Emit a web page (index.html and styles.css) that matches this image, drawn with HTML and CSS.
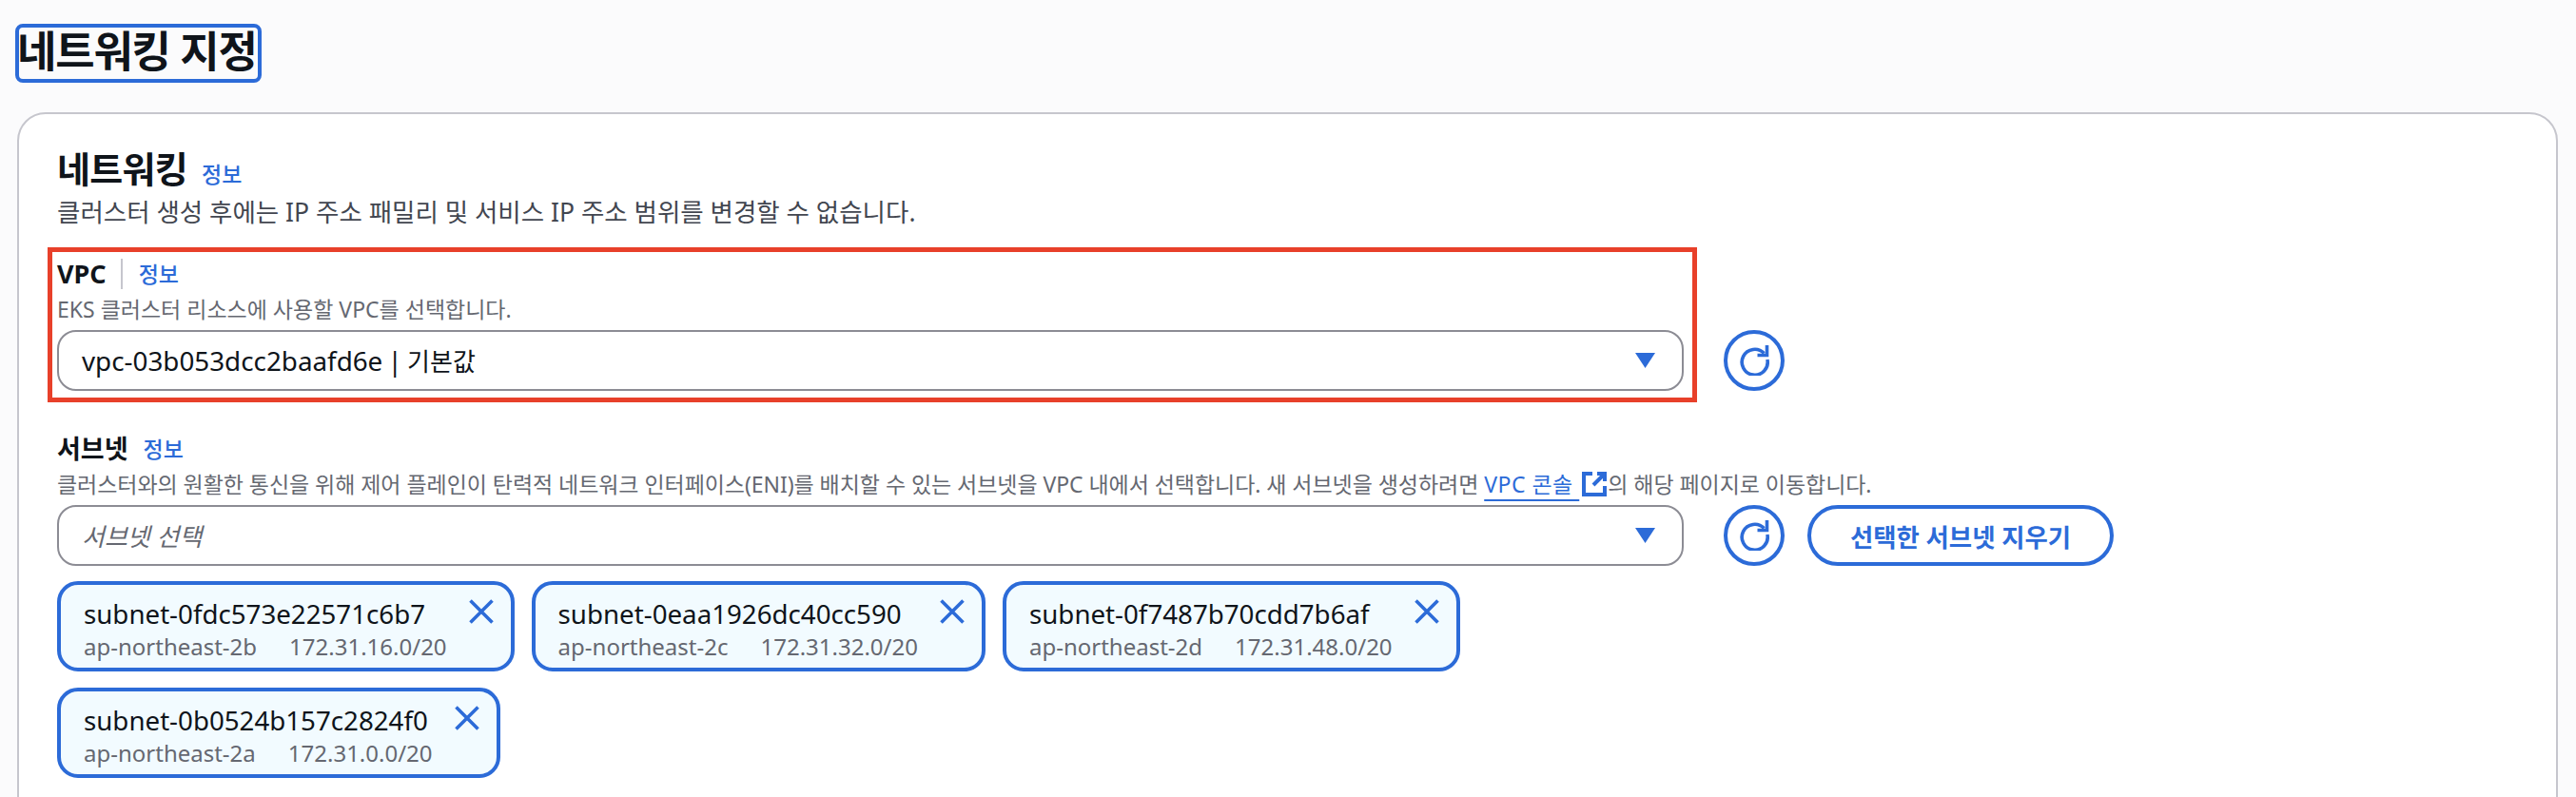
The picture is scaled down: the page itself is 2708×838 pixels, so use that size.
FILE: index.html
```html
<!DOCTYPE html>
<html lang="ko">
<head>
<meta charset="utf-8">
<title>네트워킹 지정</title>
<link rel="stylesheet" href="styles.css">
</head>
<body>
<main class="page">
  <h1 class="page-title">네트워킹 지정</h1>
  <section class="card">
    <header class="card-head">
      <div class="card-title-row"><h2 class="card-title">네트워킹</h2><a class="info">정보</a></div>
      <p class="card-desc">클러스터 생성 후에는 IP 주소 패밀리 및 서비스 IP 주소 범위를 변경할 수 없습니다.</p>
    </header>

    <div class="field field-vpc">
      <div class="annotation"></div>
      <div class="label-row"><span class="label">VPC</span><span class="divider"></span><a class="info">정보</a></div>
      <p class="hint">EKS 클러스터 리소스에 사용할 VPC를 선택합니다.</p>
      <div class="control-row">
        <div class="select"><span class="select-value">vpc-03b053dcc2baafd6e | <span class="select-value-ko">기본값</span></span><svg class="caret" viewBox="0 0 21 16"><path d="M0 0H21L10.5 16Z"/></svg></div>
        <button class="icon-btn"><svg viewBox="0 0 32 32"><path d="M26.5 8.5A13.5 13.5 0 1 0 29.9 15"/><path d="M29.5 0V10.5H19.5"/></svg></button>
      </div>
    </div>

    <div class="field field-subnet">
      <div class="label-row"><span class="label">서브넷</span><a class="info info-near">정보</a></div>
      <p class="hint hint-long">클러스터와의 원활한 통신을 위해 제어 플레인이 탄력적 네트워크 인터페이스(ENI)를 배치할 수 있는 서브넷을 VPC 내에서 선택합니다. 새 서브넷을 생성하려면 <a class="ext-link">VPC 콘솔 </a><svg class="ext-icon" viewBox="0 0 28 28"><path d="M12 3H3V25H25V16"/><path d="M13 15L24 4"/><path d="M17 3H25V11"/></svg>의 해당 페이지로 이동합니다.</p>
      <div class="control-row">
        <div class="select"><span class="select-placeholder">서브넷 선택</span><svg class="caret" viewBox="0 0 21 16"><path d="M0 0H21L10.5 16Z"/></svg></div>
        <button class="icon-btn"><svg viewBox="0 0 32 32"><path d="M26.5 8.5A13.5 13.5 0 1 0 29.9 15"/><path d="M29.5 0V10.5H19.5"/></svg></button>
        <button class="text-btn">선택한 서브넷 지우기</button>
      </div>
      <ul class="tokens">
        <li class="token"><div class="token-body"><div class="token-name">subnet-0fdc573e22571c6b7</div><div class="token-meta"><span>ap-northeast-2b</span><span>172.31.16.0/20</span></div></div><svg class="token-x" viewBox="0 0 26 26"><path d="M1.5 1.5L24.5 24.5M24.5 1.5L1.5 24.5"/></svg></li>
        <li class="token"><div class="token-body"><div class="token-name">subnet-0eaa1926dc40cc590</div><div class="token-meta"><span>ap-northeast-2c</span><span>172.31.32.0/20</span></div></div><svg class="token-x" viewBox="0 0 26 26"><path d="M1.5 1.5L24.5 24.5M24.5 1.5L1.5 24.5"/></svg></li>
        <li class="token"><div class="token-body"><div class="token-name">subnet-0f7487b70cdd7b6af</div><div class="token-meta"><span>ap-northeast-2d</span><span>172.31.48.0/20</span></div></div><svg class="token-x" viewBox="0 0 26 26"><path d="M1.5 1.5L24.5 24.5M24.5 1.5L1.5 24.5"/></svg></li>
        <li class="token"><div class="token-body"><div class="token-name">subnet-0b0524b157c2824f0</div><div class="token-meta"><span>ap-northeast-2a</span><span>172.31.0.0/20</span></div></div><svg class="token-x" viewBox="0 0 26 26"><path d="M1.5 1.5L24.5 24.5M24.5 1.5L1.5 24.5"/></svg></li>
      </ul>
    </div>
  </section>
</main>
</body>
</html>
```

FILE: styles.css
```css
* { box-sizing: border-box; }
html, body { margin: 0; height: 100%; overflow: hidden; }
body {
  background: #fbfbfc;
  color: #0f141a;
  font-family: "Noto Sans", "Noto Sans CJK KR", sans-serif;
}
.page { height: 838px; overflow: hidden; padding: 25px 19px 0 16px; }
.page-title {
  display: block;
  width: 259px;
  margin: 0;
  height: 62px;
  padding: 0;
  border: 4px solid #2c6bd8;
  border-radius: 8px;
  font-size: 45px;
  line-height: 50px;
  font-weight: 700;
  letter-spacing: -1.2px;
  text-indent: -2px;
  white-space: nowrap;
}
.card {
  margin: 31px 0 0 2px;
  height: 800px;
  padding: 34px 40px 0;
  background: #fff;
  border: 2px solid #c6c6cd;
  border-radius: 30px;
}
.card-title-row { display: flex; align-items: baseline; gap: 15px; height: 46px; }
.card-title { margin: 0; font-size: 38px; line-height: 46px; font-weight: 700; letter-spacing: -.7px; }
.info { color: #2c6bd8; font-size: 23px; font-weight: 500; line-height: 30px; }
.card-desc { margin: 3px 0 0; font-size: 26.5px; line-height: 40px; color: #424650; }
.field { position: relative; }
.field-vpc { margin-top: 26px; }
.field-subnet { margin-top: 42px; }
.annotation {
  position: absolute;
  left: -10px; top: -9px;
  width: 1734px; height: 163px;
  border: 5px solid #e8402a;
  pointer-events: none;
}
.label-row { display: flex; align-items: center; height: 38px; }
.label { font-size: 27px; font-weight: 700; line-height: 38px; }
.divider { width: 2px; height: 32px; background: #c6c6cd; margin: 0 17px 0 15px; }
.info-near { margin-left: 16px; }
.hint { margin: 0; height: 40px; font-size: 23px; line-height: 36px; color: #656871; white-space: nowrap; }
.hint-long { letter-spacing: -.05px; }
.ext-link {
  color: #2c6bd8;
  letter-spacing: .5px;
  text-decoration: underline 2px #2c6bd8;
  text-underline-offset: 7px;
}
.ext-icon { width: 28px; height: 28px; margin-left: 2px; vertical-align: -5px; fill: none; stroke: #2c6bd8; stroke-width: 4; }
.control-row { display: flex; align-items: center; height: 64px; }
.select {
  display: flex;
  align-items: center;
  justify-content: space-between;
  width: 1710px;
  height: 64px;
  padding: 0 28px 0 24px;
  border: 2px solid #8c8c94;
  border-radius: 20px;
  background: #fff;
}
.select-value { font-size: 27.8px; word-spacing: -2px; color: #0f141a; }
.select-value-ko { font-size: 26px; }
.select-placeholder { font-size: 26px; font-style: italic; color: #656871; }
.caret { width: 21px; height: 16px; fill: #2c6bd8; }
.icon-btn {
  display: flex;
  align-items: center;
  justify-content: center;
  width: 64px;
  height: 64px;
  margin-left: 42px;
  padding: 0;
  background: #fff;
  border: 4px solid #2c6bd8;
  border-radius: 50%;
}
.icon-btn svg { width: 32px; height: 32px; fill: none; stroke: #2c6bd8; stroke-width: 3.6; }
.text-btn {
  width: 322px;
  height: 64px;
  margin-left: 24px;
  padding: 0;
  background: #fff;
  border: 4px solid #2c6bd8;
  border-radius: 32px;
  color: #2c6bd8;
  font: 700 26.4px "Noto Sans", "Noto Sans CJK KR", sans-serif;
}
.tokens { display: flex; flex-wrap: wrap; gap: 17px 18px; max-width: 1710px; margin: 16px 0 0; padding: 0; list-style: none; }
.token {
  display: flex;
  align-items: flex-start;
  justify-content: space-between;
  gap: 23px;
  height: 95px;
  padding: 12px 18px 0 24px;
  background: #f2fbff;
  border: 4px solid #2c6bd8;
  border-radius: 22px;
}
.token-name { font-size: 27.7px; line-height: 36px; white-space: nowrap; }
.token-meta { display: flex; gap: 34px; margin-top: 1px; font-size: 24px; line-height: 32px; color: #656871; white-space: nowrap; }
.token-x { width: 26px; height: 26px; margin-top: 3px; fill: none; stroke: #2c6bd8; stroke-width: 3.6; }
```
